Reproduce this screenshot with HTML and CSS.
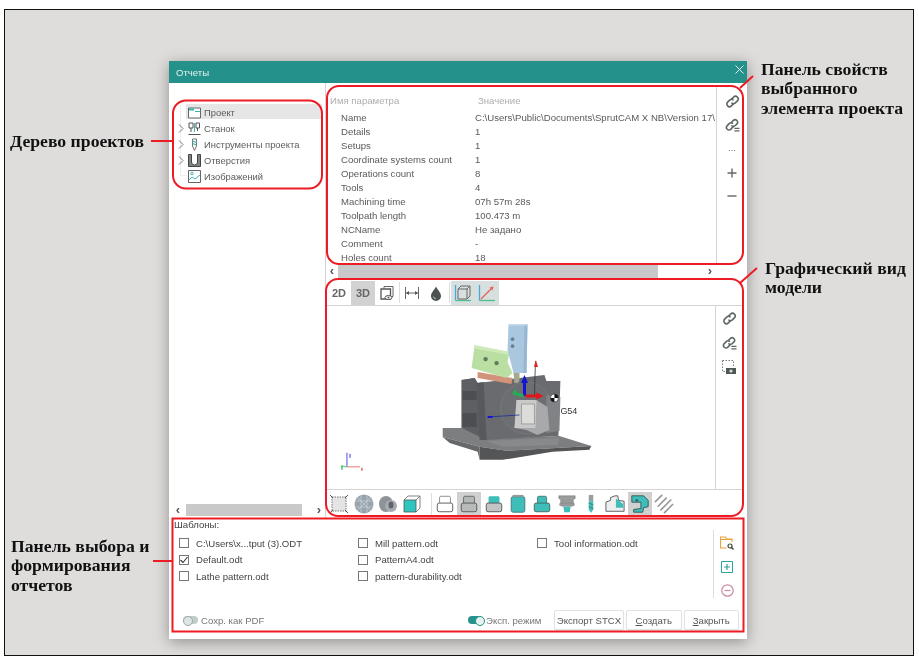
FILE: index.html
```html
<!DOCTYPE html>
<html lang="ru">
<head>
<meta charset="utf-8">
<title>Отчеты</title>
<link rel="stylesheet" href="styles.css">
</head>
<body>
<svg class="defs" width="0" height="0" aria-hidden="true">
  <defs>
    <symbol id="link" viewBox="0 0 16 16"><g fill="none" stroke="#5f6666" stroke-width="1.700" stroke-linecap="round"><path d="M7 5.500l2.200-2.200a2.800 2.800 0 0 1 4 4L11 9.500a2.800 2.800 0 0 1-3.600.3"/><path d="M9 10.500l-2.200 2.200a2.800 2.800 0 0 1-4-4L5 6.500a2.800 2.800 0 0 1 3.600-.3"/></g></symbol>
    <symbol id="linkm" viewBox="0 0 16 16"><g fill="none" stroke="#5f6666" stroke-width="1.700" stroke-linecap="round"><path d="M7 4.500l2-2a2.700 2.700 0 0 1 3.800 3.800L11 8a2.800 2.800 0 0 1-3.600.3"/><path d="M8.500 9.500l-2.200 2.400a2.700 2.700 0 0 1-3.900-3.800L4.500 6a2.800 2.800 0 0 1 3.400-.4"/></g><path d="M10 10.500h5.500v1.300H10zM10 13h5.500v1.300H10z" fill="#5f6666"/></symbol>
  </defs>
</svg>
<div class="frame">
  <section class="window">
    <header class="titlebar"><span>Отчеты</span><svg class="close" width="9" height="9" viewBox="0 0 9 9"><path d="M.5.500l8 8M8.500.5l-8 8" stroke="#e8f4f3" stroke-width="1" fill="none"/></svg></header>
    <div class="main">
      <aside class="treepane">
        <ul class="tree">
          <li class="node selected"><span class="arrow"></span><svg class="nodeicon" width="13" height="13" viewBox="0 0 13 13"><path d="M.5 2h12v10H.500z" fill="#fff" stroke="#666"/><path d="M1 2.500h5v2H1z" fill="#3bb4ab"/><path d="M7 5h5v1H7z" fill="#3bb4ab"/></svg><span>Проект</span></li>
          <li class="node"><svg class="arrow" width="6" height="9" viewBox="0 0 6 9"><path d="M1 .5l4 4-4 4" fill="none" stroke="#777"/></svg><svg class="nodeicon" width="13" height="13" viewBox="0 0 13 13"><path d="M.5 12.500h12M1 1h4v5H1zM8 1h3.500v5H8zM3 6v4M9.500 6v3" fill="none" stroke="#555"/><path d="M6 1h1v9H6z" fill="#3bb4ab"/></svg><span>Станок</span></li>
          <li class="node"><svg class="arrow" width="6" height="9" viewBox="0 0 6 9"><path d="M1 .5l4 4-4 4" fill="none" stroke="#777"/></svg><svg class="nodeicon" width="13" height="13" viewBox="0 0 13 13"><path d="M4.500 1h4v7l-2 4.500-2-4.500z" fill="#fff" stroke="#777"/><path d="M4.500 3l4 1.500M4.500 5.500L8.500 7" stroke="#3bb4ab" stroke-width="1.300"/></svg><span>Инструменты проекта</span></li>
          <li class="node"><svg class="arrow" width="6" height="9" viewBox="0 0 6 9"><path d="M1 .5l4 4-4 4" fill="none" stroke="#777"/></svg><svg class="nodeicon" width="13" height="13" viewBox="0 0 13 13"><path d="M.5.500h3v7.500a3 3 0 0 0 6 0V.500h3v12H.500z" fill="#7d8585" stroke="#444"/></svg><span>Отверстия</span></li>
          <li class="node"><span class="arrow"></span><svg class="nodeicon" width="13" height="13" viewBox="0 0 13 13"><path d="M.5.500h12v12H.500z" fill="#fff" stroke="#666"/><path d="M1 10l3-3 3 2 5-4" fill="none" stroke="#3bb4ab"/><circle cx="4" cy="3.500" r="1.300" fill="none" stroke="#3bb4ab"/></svg><span>Изображений</span></li>
        </ul>
        <div class="hscroll hscroll-tree"><span class="sarrow">‹</span><span class="thumb thumb-tree"></span><span class="sarrow">›</span></div>
      </aside>
      <div class="rightpane">
        <section class="props">
          <div class="propbody">
            <div class="table">
              <div class="thead"><span>Имя параметра</span><span class="th2">Значение</span></div>
              <div class="row"><span>Name</span><span>C:\Users\Public\Documents\SprutCAM X NB\Version 17\</span></div>
              <div class="row"><span>Details</span><span>1</span></div>
              <div class="row"><span>Setups</span><span>1</span></div>
              <div class="row"><span>Coordinate systems count</span><span>1</span></div>
              <div class="row"><span>Operations count</span><span>8</span></div>
              <div class="row"><span>Tools</span><span>4</span></div>
              <div class="row"><span>Machining time</span><span>07h 57m 28s</span></div>
              <div class="row"><span>Toolpath length</span><span>100.473 m</span></div>
              <div class="row"><span>NCName</span><span>Не задано</span></div>
              <div class="row"><span>Comment</span><span>-</span></div>
              <div class="row"><span>Holes count</span><span>18</span></div>
            </div>
            <div class="sidebar">
              <svg width="15" height="15"><use href="#link"/></svg>
              <svg width="15" height="15"><use href="#linkm"/></svg>
              <span class="dots">...</span>
              <svg width="14" height="14" viewBox="0 0 14 14"><path d="M7 2.500v9M2.500 7h9" stroke="#666" stroke-width="1.400"/></svg>
              <svg width="14" height="14" viewBox="0 0 14 14"><path d="M2.500 7h9" stroke="#666" stroke-width="1.400"/></svg>
            </div>
          </div>
          <div class="hscroll hscroll-props"><span class="sarrow">‹</span><span class="thumb thumb-props"></span><span class="sarrow">›</span></div>
        </section>
        <section class="graphic">
          <div class="topbar">
            <span class="tool t2d">2D</span>
            <span class="tool t2d on">3D</span>
            <span class="tool"><svg width="16" height="16" viewBox="0 0 16 16"><path d="M5 3.500V1.500h9v10h-2" fill="none" stroke="#666"/><path d="M2 4h9.500v10H2z" fill="#fff" stroke="#555" stroke-width="1.300"/><ellipse cx="9.500" cy="12.500" rx="3.500" ry="2" fill="#fff" stroke="#555"/><circle cx="9.500" cy="12.500" r="1" fill="#555"/></svg></span>
            <span class="sep"></span>
            <span class="tool"><svg width="16" height="14" viewBox="0 0 16 14"><path d="M1.500 1v12M14.500 1v12M2 7h12" fill="none" stroke="#666"/><path d="M2 7l3-2v4zM14 7l-3-2v4z" fill="#555"/></svg></span>
            <span class="tool"><svg width="12" height="15" viewBox="0 0 12 15"><path d="M6 .5C4.500 4 1 6.500 1 10a5 5 0 0 0 10 0C11 6.500 7.500 4 6 .5z" fill="#4a5252"/><path d="M3.500 10.500a2.600 2.600 0 0 0 2.500 2.300" fill="none" stroke="#bbb"/></svg></span>
            <span class="sep sep-thin"></span>
            <span class="tool on soft"><svg width="18" height="18" viewBox="0 0 18 18"><path d="M1.500 1v15.500" stroke="#4aa8d8" stroke-width="1.300"/><path d="M1.500 16.500H17" stroke="#4dc08a" stroke-width="1.300"/><path d="M4 5l3-3h9v10l-3 3H4z" fill="none" stroke="#666"/><path d="M4 5h9v10M13 5l3-3" fill="none" stroke="#666"/></svg></span>
            <span class="tool on soft"><svg width="18" height="18" viewBox="0 0 18 18"><path d="M1.500 1v15.500" stroke="#4aa8d8" stroke-width="1.300"/><path d="M1.500 16.500H17" stroke="#4dc08a" stroke-width="1.300"/><path d="M3 15L15 3" stroke="#e8605c" stroke-width="1.300"/><path d="M15.500 2.500l-4 1 3 3z" fill="#e8605c"/></svg></span>
          </div>
          <div class="viewbody">
            <div class="viewport">
              <svg class="model" width="389" height="183" viewBox="327 306 389 183">
                <path d="M443 428h19l25 11 73-3 32 10-85 5-27-4-37-10z" fill="#7c7e80"/>
                <path d="M443 437l37 10v13l-2-8-28-9z" fill="#66686a"/>
                <path d="M480 447l27 4 85-5-2 4-37 2-50 8h-23z" fill="#535557"/>
                <path d="M487 441l73-3-2 7-55 2z" fill="#88898b"/>
                <path d="M462 380l13-2 3 5 67-8 2 6 14 0-2 55-72 4-25-12z" fill="#696b6e"/>
                <path d="M462 380l13-2 3 5 9 57-25-12z" fill="#5d5f62"/>
                <path d="M463 391h14v9h-14zM463 413h14v14h-14z" fill="#4c4e51"/>
                <path d="M477 383l3 57 7 0-3-58z" fill="#58595c"/>
                <circle cx="527" cy="408" r="26" fill="#6c6e71" stroke="#7d7f82" stroke-width=".6"/>
                <path d="M547 395l14 2-1 34-13 2z" fill="#808285"/>
                <path d="M478 372l35 6-1 6-34-6z" fill="#d1937a"/>
                <path d="M475 345l35 7-2 10 5 11-6 5-35-10z" fill="#b9dfa2"/>
                <path d="M475 345l35 7v3l-36-7z" fill="#cfeab9"/>
                <circle cx="486" cy="359" r="2.200" fill="#5f7a5c"/>
                <circle cx="497" cy="363" r="2.200" fill="#5f7a5c"/>
                <path d="M514 373h6v8l-2 2h-3z" fill="#a3a88f"/>
                <path d="M509 324h19l-1 49h-13l-6-23z" fill="#a9c7df"/>
                <path d="M525 324h3l-1 49h-3z" fill="#97b6d0"/>
                <path d="M509 324h19v1.500h-19z" fill="#c4d9ea"/>
                <circle cx="513" cy="339" r="1.800" fill="#667f93"/>
                <circle cx="513" cy="346" r="1.800" fill="#667f93"/>
                <path d="M517 400l20 0 11 7 2 23-12 5-11-5-12-2z" fill="#a8a9aa"/>
                <path d="M517 400h20l-1 28-21 0z" fill="#c9c9c8"/>
                <path d="M522 404h13v20h-13z" fill="#dcdcdb" stroke="#8b8b8b" stroke-width=".7"/>
                <path d="M489 417l31-2" stroke="#1d2f9c" stroke-width=".8"/>
                <path d="M488 416h5v2h-5z" fill="#1212dd"/>
                <path d="M536 361l-1 35" stroke="#333" stroke-width=".8"/>
                <path d="M536.500 360l-2 7h4z" fill="#e3252a"/>
                <path d="M523.500 383h3v13h-3z" fill="#1414d8"/>
                <path d="M525 375l-3.500 8h7z" fill="#1414d8"/>
                <path d="M526 394.500h12v3h-12z" fill="#e3151a"/>
                <path d="M544 396l-7-3.500v7z" fill="#e3151a"/>
                <path d="M524 396l-10-3" stroke="#20b050" stroke-width="3"/>
                <path d="M513 393l3-4 2 6z" fill="#20b050"/>
                <circle cx="555" cy="398" r="4" fill="#fff" stroke="#222" stroke-width=".6"/>
                <path d="M555 398v-4a4 4 0 0 1 4 4zM555 398v4a4 4 0 0 1-4-4z" fill="#111"/>
                <text x="561" y="414" class="g54">G54</text>
                <path d="M347 467v-14" stroke="#6a6ae8" stroke-width="1.200"/>
                <path d="M347 467h13" stroke="#f08a8a" stroke-width="1.200"/>
                <path d="M347 467l-6-1" stroke="#5fd08a" stroke-width="1.200"/>
                <path d="M342 466v4" stroke="#45c078" stroke-width="1.500"/>
                <path d="M349 454h2v4h-2z" fill="#9a9af0"/>
                <path d="M361 468h2v3h-2z" fill="#f08a8a"/>
              </svg>
              <div class="viewside">
                <svg width="15" height="15"><use href="#link"/></svg>
                <svg width="15" height="15"><use href="#linkm"/></svg>
                <svg width="15" height="15" viewBox="0 0 15 15"><path d="M.5.500h11v6M.5.500v11h3" fill="none" stroke="#777" stroke-dasharray="1.500 1.500"/><path d="M4 8h10v6H4z" fill="#4f5757"/><circle cx="9" cy="11" r="1.600" fill="#ddd"/></svg>
              </div>
            </div>
          </div>
          <div class="bottombar">
            <span class="btool"><svg width="20" height="20" viewBox="0 0 20 20"><path d="M3 3h14v14H3z" fill="#e4e4e4" stroke="#777" stroke-dasharray="1.500 1"/><path d="M1 1l3 3M19 1l-3 3M1 19l3-3M19 19l-3-3" stroke="#555"/></svg></span>
            <span class="btool"><svg width="20" height="20" viewBox="0 0 20 20"><circle cx="10" cy="10" r="9.500" fill="#97a4ad"/><path d="M1 7h18M1 13h18M7 1v18M13 1v18M3 3l14 14M17 3L3 17" stroke="#cdd3d8" stroke-width=".7"/></svg></span>
            <span class="btool"><svg width="20" height="20" viewBox="0 0 20 20"><ellipse cx="8" cy="10" rx="7" ry="8" fill="#8d9398"/><ellipse cx="13" cy="12" rx="6" ry="6" fill="#a5abb0"/><ellipse cx="13" cy="11" rx="2.500" ry="3.500" fill="#5f656a"/></svg></span>
            <span class="btool"><svg width="18" height="18" viewBox="0 0 18 18"><path d="M1 5h12v12H1z" fill="#2fc6c0" stroke="#555" stroke-width=".8"/><path d="M1 5l4-4h12v12l-4 4M13 5l4-4" fill="none" stroke="#666" stroke-width=".8"/></svg></span>
            <span class="bsep"></span>
            <span class="btool"><svg width="20" height="20" viewBox="0 0 22 22"><rect x="5" y="2.500" width="12" height="8" rx="1.500" fill="#fff" stroke="#888"/><rect x="2.500" y="10" width="17" height="9.500" rx="2" fill="#fff" stroke="#555"/></svg></span>
            <span class="btool on"><svg width="20" height="20" viewBox="0 0 22 22"><rect x="5" y="2.500" width="12" height="8" rx="1.500" fill="#b4b8b8" stroke="#666"/><rect x="2.500" y="10" width="17" height="9.500" rx="2" fill="#b8baba" stroke="#555"/></svg></span>
            <span class="btool"><svg width="20" height="20" viewBox="0 0 22 22"><rect x="5" y="2.500" width="12" height="8" rx="1.500" fill="#3fbdb8"/><rect x="2.500" y="10" width="17" height="9.500" rx="2" fill="#c3c5c5" stroke="#555"/></svg></span>
            <span class="btool"><svg width="20" height="20" viewBox="0 0 22 22"><rect x="3.500" y="3" width="15" height="17" rx="2" fill="#3fbdb8" stroke="#477"/><rect x="5" y="1" width="12" height="2" fill="#999"/></svg></span>
            <span class="btool"><svg width="20" height="20" viewBox="0 0 22 22"><rect x="6" y="2.500" width="10" height="8" rx="1.500" fill="#3fbdb8" stroke="#477"/><rect x="2.500" y="10" width="17" height="9.500" rx="2" fill="#3fbdb8" stroke="#466"/></svg></span>
            <span class="btool"><svg width="20" height="20" viewBox="0 0 22 22"><path d="M2 2h18v3l-2 1H4L2 5zM4 7h14v3H4zM3 10.500h16v2l-3 1H6l-3-1z" fill="#9a9e9e" stroke="#666" stroke-width=".5"/><path d="M7 14h8l-1 6H8z" fill="#3fbdb8"/></svg></span>
            <span class="btool"><svg width="20" height="20" viewBox="0 0 22 22"><path d="M8.500 1h5v7h-5z" fill="#9a9e9e"/><path d="M8.500 8h5v9l-2.500 4-2.500-4z" fill="#3fbdb8"/><path d="M8.500 10l5 2M8.500 14l5 2" stroke="#477"/></svg></span>
            <span class="btool"><svg width="22" height="20" viewBox="0 0 24 22"><path d="M2 19V9l5-2V4l5-2h3l1 5 6 1v11z" fill="#eee" stroke="#555"/><path d="M13 5l8 6v4h-8z" fill="#3fbdb8"/></svg></span>
            <span class="btool on"><svg width="20" height="20" viewBox="0 0 22 22"><path d="M2 2h13l5 5v7l-5 1-1 5H4v-3l8-1V9H2z" fill="#3fbdb8" stroke="#355"/><path d="M6 6h3v2H6z" fill="#355"/></svg></span>
            <span class="btool"><svg width="20" height="20" viewBox="0 0 22 22"><path d="M1 9l8-8M4 14L14 4M7 18L19 6M11 21l10-10" fill="none" stroke="#999" stroke-width="1.800"/></svg></span>
          </div>
        </section>
      </div>
    </div>
    <footer class="reports">
      <div class="templates">
        <div class="lists">
          <div class="caption">Шаблоны:</div>
          <div class="checks">
            <label class="check"><i class="box"></i>C:\Users\x...tput (3).ODT</label>
            <label class="check"><i class="box"></i>Mill pattern.odt</label>
            <label class="check"><i class="box"></i>Tool information.odt</label>
            <label class="check"><i class="box"><svg width="8" height="8" viewBox="0 0 8 8"><path d="M.5 4l2.500 2.500L7.500 1" fill="none" stroke="#333" stroke-width="1.100"/></svg></i>Default.odt</label>
            <label class="check"><i class="box"></i>PatternA4.odt</label>
            <span></span>
            <label class="check"><i class="box"></i>Lathe pattern.odt</label>
            <label class="check"><i class="box"></i>pattern-durability.odt</label>
          </div>
        </div>
        <div class="fileside">
          <svg width="14" height="14" viewBox="0 0 14 14"><path d="M.5 4.500V1h5l1 2h5.500v3M.5 3.500h11M.5 3.500V12h6" fill="none" stroke="#e9a13a" stroke-width="1.100"/><circle cx="10" cy="10" r="2" fill="none" stroke="#444" stroke-width="1.200"/><path d="M11.500 11.500l2 2" stroke="#444" stroke-width="1.400"/></svg>
          <svg width="12" height="12" viewBox="0 0 12 12"><path d="M.5.500h11v11H.500z" fill="#fff" stroke="#2ea59d"/><path d="M6 3v6M3 6h6" stroke="#2ea59d" stroke-width="1.200"/></svg>
          <svg width="13" height="13" viewBox="0 0 13 13"><circle cx="6.500" cy="6.500" r="5.700" fill="#fff" stroke="#cf8ba0" stroke-width="1.200"/><path d="M3.500 6.500h6" stroke="#cf8ba0" stroke-width="1.200"/></svg>
        </div>
      </div>
      <div class="actions">
        <span class="switch"><i class="toggle"></i>Сохр. как PDF</span>
        <span class="switch switch-on"><i class="toggle on"></i>Эксп. режим</span>
        <button class="btn btn-wide">Экспорт STCX</button>
        <button class="btn btn-mid"><u>С</u>оздать</button>
        <button class="btn btn-mid"><u>З</u>акрыть</button>
      </div>
    </footer>
  </section>

  <svg class="marks" width="919" height="659" viewBox="0 0 919 659">
    <g fill="none" stroke="#ed1c24" stroke-width="2">
      <rect x="173" y="100.500" width="149" height="88" rx="13"/>
      <rect x="327" y="86" width="416" height="178" rx="12"/>
      <rect x="326" y="279" width="417" height="237" rx="12"/>
      <rect x="172.500" y="518.500" width="571" height="113"/>
      <path d="M151 141h22M740 88l13-12M740 283l17-15M153 561h19"/>
    </g>
  </svg>
  <div class="note note-tree">Дерево проектов</div>
  <div class="note note-props">Панель свойств<br>выбранного<br>элемента проекта</div>
  <div class="note note-view">Графический вид<br>модели</div>
  <div class="note note-rep">Панель выбора и<br>формирования<br>отчетов</div>
</div>
</body>
</html>
```

FILE: styles.css
```css
* { box-sizing: border-box; }
html, body { margin: 0; padding: 0; background: #fff; height: 100%; overflow: hidden; }
body { font-family: "Liberation Sans", "Roboto", sans-serif; font-size: 9.600px; color: #555; }
.defs { position: absolute; }

.frame {
  position: absolute;
  inset: 9px auto auto 4px;
  width: 910px;
  height: 647px;
  border: 1px solid #111;
  background: #dedddc;
  padding: 51px 0 0 164px;
  filter: blur(.3px);
}

.window {
  width: 578px;
  height: 578px;
  background: #fff;
  display: flex;
  flex-direction: column;
  box-shadow: 0 3px 14px rgba(0, 0, 0, .35);
}
.titlebar {
  height: 22px;
  flex: none;
  background: #24918b;
  color: #e6f3f2;
  padding: 0 3px 0 7px;
  display: flex;
  align-items: center;
  justify-content: space-between;
}
.close { margin-bottom: 6px; }

.main { flex: 1; display: flex; min-height: 0; }
.treepane {
  width: 157px;
  flex: none;
  border-right: 1px solid #d4d4d4;
  display: flex;
  flex-direction: column;
  justify-content: space-between;
  padding-top: 21px;
}
.tree { list-style: none; margin: 0; padding: 0 3px 0 0; position: relative; }
.tree::before { content: ""; position: absolute; left: 11px; top: 2px; bottom: 8px; width: 6px; border-left: 1px solid #eee; border-bottom: 1px solid #eee; }
.node { height: 16px; display: flex; align-items: center; padding-left: 9px; color: #5c5c5c; position: relative; font-size: 9.400px; }
.node .arrow { width: 6px; height: 9px; flex: none; margin-right: 4px; }
.nodeicon { flex: none; margin-right: 3px; }
.selected { background: linear-gradient(#e6e6e6, #e6e6e6) 17px 0 / 100% 15px no-repeat; }

.hscroll {
  height: 12px;
  flex: none;
  display: flex;
  align-items: center;
  color: #555;
  font-size: 13px;
  line-height: 10px;
  margin-bottom: 1px;
}
.hscroll-tree { padding-left: 3px; }
.sarrow { width: 12px; text-align: center; flex: none; font-weight: 700; }
.thumb { height: 100%; background: #c9c9c9; }
.thumb-tree { width: 116px; margin-right: auto; margin-left: 2px; }
.thumb-props { width: 320px; margin-right: auto; }
.hscroll-props { margin: 0; width: 390px; height: 14px; }

.rightpane { flex: 1; min-width: 0; display: flex; flex-direction: column; }
.props { height: 195px; flex: none; display: flex; flex-direction: column; }
.propbody { height: 181px; flex: none; display: flex; }
.table { width: 391px; flex: none; border-right: 1px solid #d4d4d4; overflow: hidden; padding-top: 8px; margin-top: 3px; }
.thead { height: 17px; display: flex; color: #aeaeae; padding-left: 4px; line-height: 14px; }
.thead span:first-child { width: 148px; }
.row { height: 14.060px; line-height: 14px; display: grid; grid-template-columns: 134px 1fr; padding-left: 15px; white-space: nowrap; color: #5a5a5a; }
.sidebar { flex: 1; display: flex; flex-direction: column; align-items: center; padding-top: 11px; gap: 9.300px; }
.dots { height: 14px; line-height: 10px; color: #777; }

.graphic { flex: 1; min-height: 0; display: flex; flex-direction: column; padding-top: 3px; }
.topbar { height: 25px; flex: none; border-bottom: 1px solid #d4d4d4; display: flex; padding-left: 1px; margin-right: 4px; }
.tool { width: 24px; height: 24px; display: flex; align-items: center; justify-content: center; flex: none; }
.t2d { font-weight: 700; font-size: 11px; color: #666; }
.tool.on { background: #d2d2d2; }
.tool.soft { background: #d8dfdf; }
.sep { width: 1px; height: 21px; background: #ddd; margin: 1px 0 0; flex: none; }
.sep-thin { margin-left: 1px; margin-right: 1px; }

.viewbody { flex: 1; min-height: 0; }
.viewport { height: 100%; display: flex; margin-right: 4px; border-bottom: 1px solid #d4d4d4; margin-left: 1px; }
.model { flex: none; border-right: 1px solid #d4d4d4; }
.g54 { font-family: "Liberation Sans", sans-serif; font-size: 9px; fill: #333; }
.viewside { flex: 1; display: flex; flex-direction: column; align-items: center; padding: 5px 0 0 0; gap: 9.500px; }

.bottombar { height: 27px; flex: none; display: flex; align-items: center; padding-left: 1px; }
.btool { width: 24.400px; height: 24px; display: flex; align-items: center; justify-content: center; flex: none; }
.btool.on { background: #d0d0d0; }
.bsep { width: 1px; height: 22px; background: #ddd; margin: 0 1px 0 6px; flex: none; }

.reports { height: 122px; flex: none; padding: 2px 8px 9px 5px; display: flex; flex-direction: column; justify-content: space-between; }
.templates { display: flex; flex: 1; min-height: 0; align-items: flex-start; }
.lists { flex: 1; }
.caption { line-height: 12px; color: #444; margin-bottom: 4px; }
.checks { display: grid; grid-template-columns: 179px 179px 1fr; grid-auto-rows: 16.500px; padding-left: 5px; }
.check { display: flex; align-items: center; gap: 7px; color: #444; white-space: nowrap; }
.box { width: 10px; height: 10px; border: 1px solid #777; background: #fff; display: flex; align-items: center; justify-content: center; flex: none; }
.fileside { width: 27px; height: 68px; flex: none; border-left: 1px solid #ddd; margin: 11px -1px 0 0; display: flex; flex-direction: column; align-items: center; padding-top: 6px; gap: 11px; }

.actions { display: flex; align-items: center; height: 20px; padding-left: 9px; flex: none; }
.switch { display: flex; align-items: center; gap: 3px; color: #777; width: 285px; flex: none; white-space: nowrap; }
.switch-on { width: 86px; }
.toggle { width: 15px; height: 8px; border-radius: 4px; background: #c2ccca; position: relative; display: block; flex: none; }
.toggle::after { content: ""; position: absolute; left: 0; top: 0; width: 8px; height: 8px; border-radius: 50%; background: #dfe5e4; border: 1px solid #9aa; }
.toggle.on { background: #23938c; }
.toggle.on::after { left: 7px; background: #e8f2f1; border-color: #23938c; }
.btn {
  height: 20px;
  font: inherit;
  color: #555;
  background: #fff;
  border: 1px solid #e2e2e2;
  border-radius: 2px;
  padding: 0;
  box-shadow: 0 1px 1px rgba(0, 0, 0, .08);
  margin-right: 2px;
  flex: none;
}
.btn:last-child { margin-right: 0; }
.btn-wide { width: 70px; }
.btn-mid { width: 55.500px; }

.marks { position: absolute; left: -5px; top: -10px; pointer-events: none; }
.note { position: absolute; font-family: "Liberation Serif", serif; font-weight: 700; font-size: 17.700px; line-height: 19.300px; color: #111; white-space: nowrap; }
.note-tree { left: 5px; top: 122px; }
.note-props { left: 756px; top: 50px; }
.note-view { left: 760px; top: 249px; }
.note-rep { left: 6px; top: 527px; }
```
